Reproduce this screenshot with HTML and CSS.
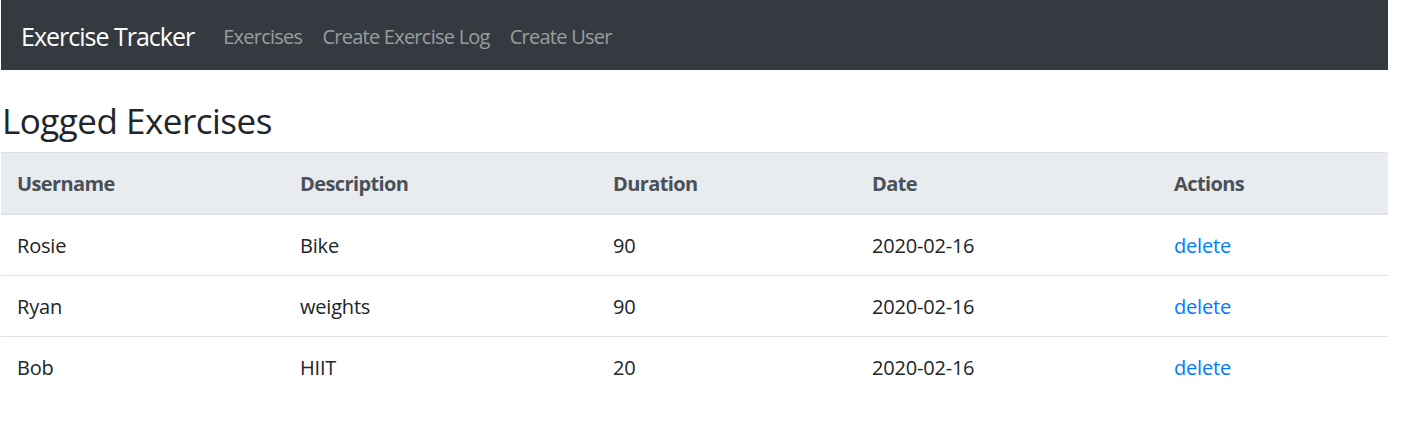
FILE: index.html
```html
<!DOCTYPE html>
<html lang="en">
<head>
<meta charset="utf-8">
<title>Exercise Tracker</title>
<link rel="stylesheet" href="styles.css">
</head>
<body>
<div class="page">
  <nav class="navbar">
    <a class="brand" href="#">Exercise Tracker</a>
    <ul class="nav">
      <li><a class="nav-link" href="#">Exercises</a></li>
      <li><a class="nav-link" href="#">Create Exercise Log</a></li>
      <li><a class="nav-link" href="#">Create User</a></li>
    </ul>
  </nav>
  <main class="content">
    <h3 class="title">Logged Exercises</h3>
    <table class="table">
      <colgroup>
        <col class="c1"><col class="c2"><col class="c3"><col class="c4"><col class="c5">
      </colgroup>
      <thead>
        <tr><th>Username</th><th>Description</th><th>Duration</th><th>Date</th><th>Actions</th></tr>
      </thead>
      <tbody>
        <tr><td>Rosie</td><td>Bike</td><td>90</td><td>2020-02-16</td><td><a href="#" class="link">delete</a></td></tr>
        <tr><td>Ryan</td><td>weights</td><td>90</td><td>2020-02-16</td><td><a href="#" class="link">delete</a></td></tr>
        <tr><td>Bob</td><td>HIIT</td><td>20</td><td>2020-02-16</td><td><a href="#" class="link">delete</a></td></tr>
      </tbody>
    </table>
  </main>
</div>
</body>
</html>
```
FILE: styles.css
```css
* { box-sizing: border-box; }
html, body { margin: 0; padding: 0; background: #fff; }
body {
  font-family: "Open Sans", "Noto Sans", "Liberation Sans", sans-serif;
  font-size: 20px;
  line-height: 1.5;
  color: #212529;
}
.page {
  width: 1387px;
  margin-left: 1px;
}
.navbar {
  display: flex;
  align-items: center;
  background: #343a40;
  padding: 12px 20px 8px;
  height: 70px;
}
.brand {
  font-size: 25px;
  line-height: 37.5px;
  letter-spacing: -1px;
  color: #fff;
  text-decoration: none;
  margin-right: 19px;
  padding: 6px 0;
}
.nav {
  display: flex;
  list-style: none;
  margin: 0;
  padding: 0;
}
.nav-link {
  display: block;
  padding: 10px 10px;
  color: rgba(255,255,255,0.5);
  text-decoration: none;
  font-size: 20px;
  line-height: 30px;
  letter-spacing: -0.75px;
}
.content {
  padding-top: 30px;
}
.title {
  font-size: 35px;
  font-weight: 500;
  line-height: 1.2;
  letter-spacing: -0.5px;
  margin: 0 0 10px 1px;
}
.table {
  width: 100%;
  border-collapse: collapse;
  table-layout: fixed;
}
.c1 { width: 283px; }
.c2 { width: 313px; }
.c3 { width: 259px; }
.c4 { width: 302px; }
.c5 { width: 230px; }
.table th, .table td {
  padding: 16px 15px 14px 16px;
  text-align: left;
  vertical-align: top;
  border-top: 1px solid #dee2e6;
}
.table td {
  letter-spacing: -0.2px;
}
.table thead th {
  background: #e9ecef;
  color: #495057;
  font-weight: 700;
  letter-spacing: -0.6px;
  border-bottom: 2px solid #dee2e6;
}
.link {
  color: #007bff;
  text-decoration: none;
}
```
